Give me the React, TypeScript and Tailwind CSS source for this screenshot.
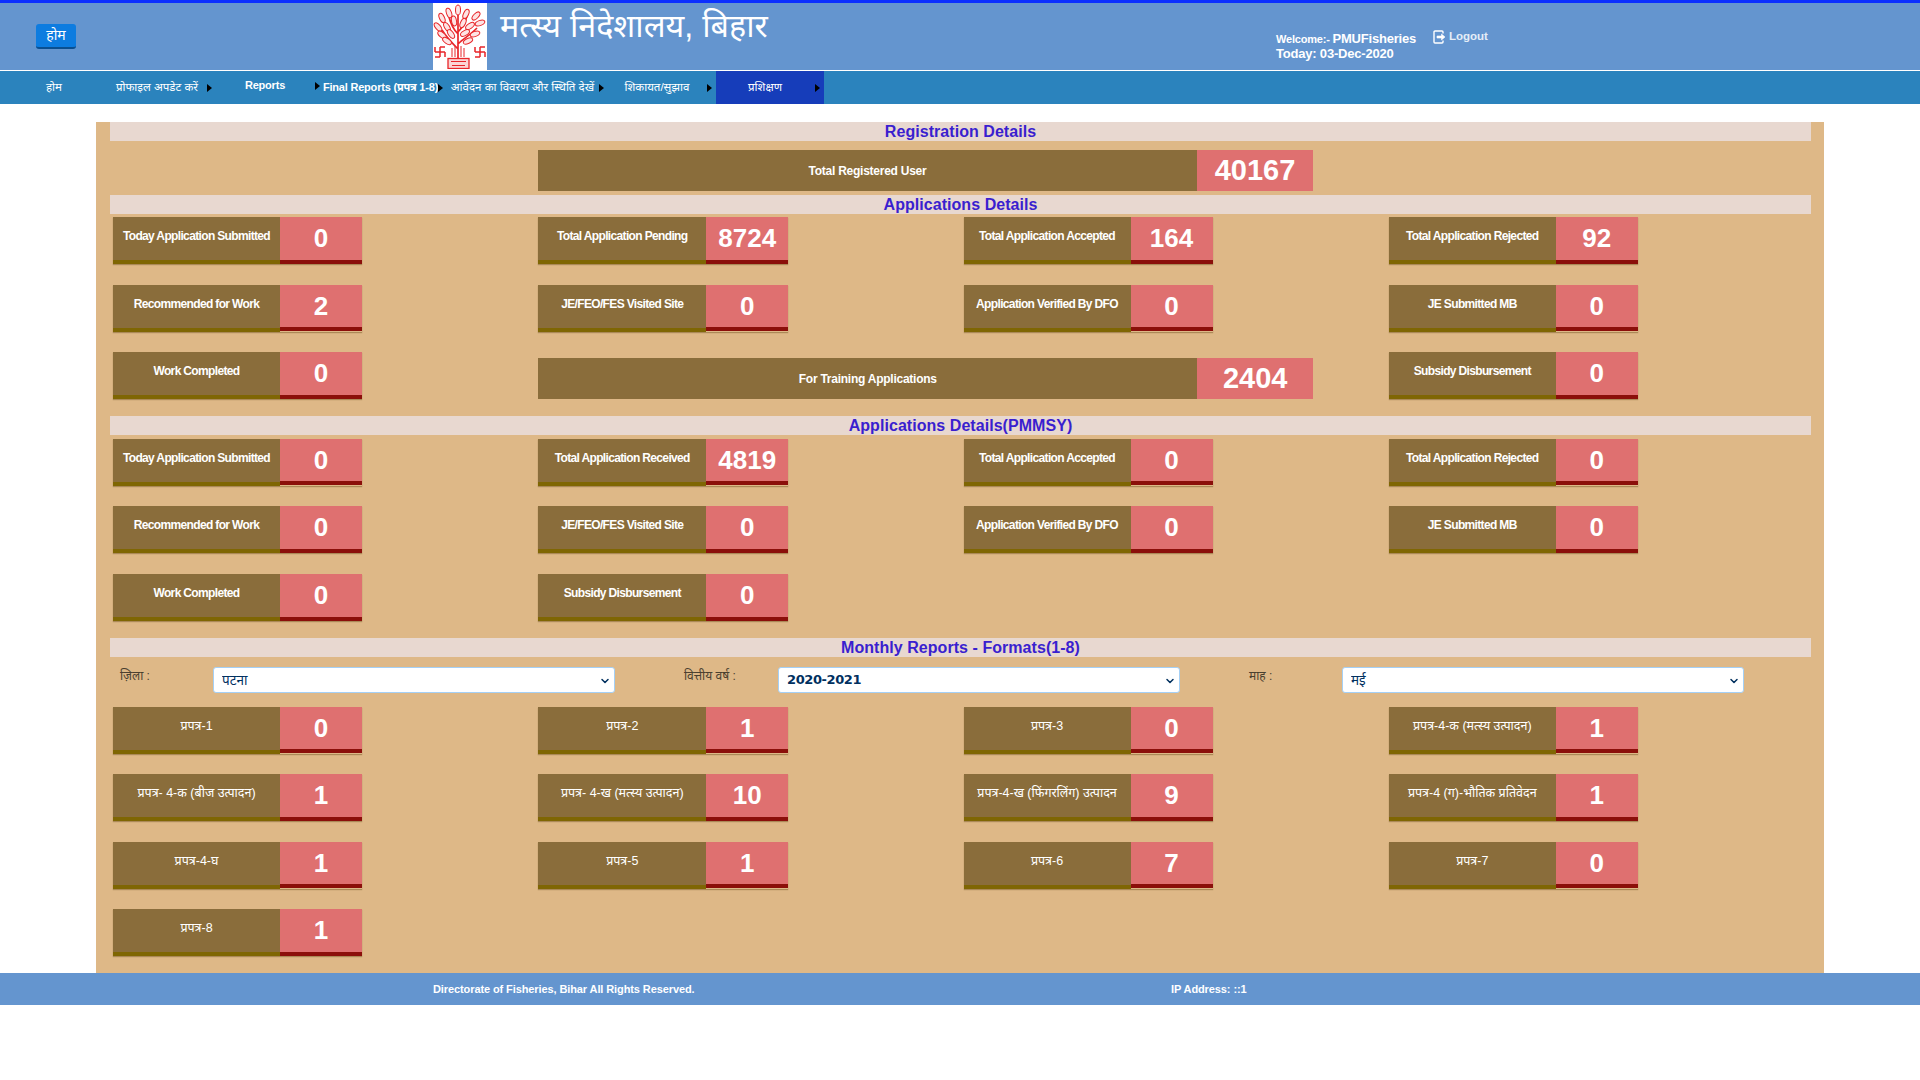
import React from "react";
import { ChevronDown } from "lucide-react";

type CardData = { label: string; value: string; edge?: boolean; hindi?: boolean };

const navItems = [
  { label: "होम", width: "w-[108px]", arrow: false, hindi: true },
  { label: "प्रोफाइल अपडेट करें", width: "w-[108px]", arrow: true, hindi: true },
  { label: "Reports", width: "w-[108px]", arrow: true, raised: true },
  { label: "Final Reports (प्रपत्र 1-8)", width: "w-[123px]", arrow: true },
  { label: "आवेदन का विवरण और स्थिति देखें", width: "w-[161px]", arrow: true, hindi: true },
  { label: "शिकायत/सुझाव", width: "w-[108px]", arrow: true, hindi: true },
  { label: "प्रशिक्षण", width: "w-[108px]", arrow: true, active: true, hindi: true },
];

const appRows: CardData[] = [
  { label: "Today Application Submitted", value: "0" },
  { label: "Total Application Pending", value: "8724" },
  { label: "Total Application Accepted", value: "164" },
  { label: "Total Application Rejected", value: "92" },
  { label: "Recommended for Work", value: "2", edge: true },
  { label: "JE/FEO/FES Visited Site", value: "0", edge: true },
  { label: "Application Verified By DFO", value: "0", edge: true },
  { label: "JE Submitted MB", value: "0", edge: true },
];

const pmmsy: CardData[] = [
  { label: "Today Application Submitted", value: "0", edge: true },
  { label: "Total Application Received", value: "4819", edge: true },
  { label: "Total Application Accepted", value: "0", edge: true },
  { label: "Total Application Rejected", value: "0", edge: true },
  { label: "Recommended for Work", value: "0" },
  { label: "JE/FEO/FES Visited Site", value: "0" },
  { label: "Application Verified By DFO", value: "0" },
  { label: "JE Submitted MB", value: "0" },
  { label: "Work Completed", value: "0" },
  { label: "Subsidy Disbursement", value: "0" },
];

const formats: CardData[] = [
  { label: "प्रपत्र-1", value: "0", edge: true, hindi: true },
  { label: "प्रपत्र-2", value: "1", edge: true, hindi: true },
  { label: "प्रपत्र-3", value: "0", edge: true, hindi: true },
  { label: "प्रपत्र-4-क (मत्स्य उत्पादन)", value: "1", edge: true, hindi: true },
  { label: "प्रपत्र- 4-क (बीज उत्पादन)", value: "1", hindi: true },
  { label: "प्रपत्र- 4-ख (मत्स्य उत्पादन)", value: "10", hindi: true },
  { label: "प्रपत्र-4-ख (फिंगरलिंग) उत्पादन", value: "9", hindi: true },
  { label: "प्रपत्र-4 (ग)-भौतिक प्रतिवेदन", value: "1", hindi: true },
  { label: "प्रपत्र-4-घ", value: "1", edge: true, hindi: true },
  { label: "प्रपत्र-5", value: "1", edge: true, hindi: true },
  { label: "प्रपत्र-6", value: "7", edge: true, hindi: true },
  { label: "प्रपत्र-7", value: "0", edge: true, hindi: true },
  { label: "प्रपत्र-8", value: "1", hindi: true },
];

const leaves = [
  [25, 7, 0], [16, 10, -20], [33, 11, 25], [9, 15, -25], [43, 13, 45],
  [21, 18, -10], [30, 20, 25], [5, 24, -40], [14, 24, -30], [37, 23, 55],
  [47, 20, 70], [9, 32, -50], [18, 31, -35], [42, 31, 70], [32, 30, 60],
  [14, 38, -55], [35, 38, 65],
];

const Emblem = () => (
  <svg viewBox="0 0 54 66" className="h-[66px] w-[54px]" fill="none" stroke="#e8262a">
    <path d="M25 55V12M25 46C19 40 14 35 9 27M25 41C30 36 37 32 44 25M25 31C21 27 18 22 16 14M25 29C29 25 32 20 34 13" strokeWidth="1.7" />
    {leaves.map(([x, y, r], i) => (
      <ellipse key={i} cx={x} cy={y} rx="2.5" ry="5" strokeWidth="1" fill="#fde4e4" transform={`rotate(${r} ${x} ${y})`} />
    ))}
    <path d="M19 45v9M22 43v11M28 43v11M31 45v9" strokeWidth="1" />
    <path d="M7 44v10M2 49h10M7 44h5M12 49v5M7 54H2M2 49v-5" strokeWidth="1.5" />
    <path d="M47 44v10M42 49h10M47 44h5M52 49v5M47 54h-5M42 49v-5" strokeWidth="1.5" />
    <rect x="15" y="55.5" width="21" height="10" strokeWidth="1.3" fill="#fbd5d5" />
    <path d="M18 58.5h15M19 62.5h13" strokeWidth="1.1" />
  </svg>
);

const SectionTitle = ({ title }: { title: string }) => (
  <div className="h-[19px] bg-[#e8d8d0] text-center text-[16px] font-bold leading-[19px] tracking-[0.05px] text-[#3a1fcf]">{title}</div>
);

const Card = ({ label, value, edge, hindi }: CardData) => (
  <div className="ml-[3px] flex h-[47px] w-fit shadow-[0_1px_1px_rgba(120,90,40,0.5)] [&:nth-child(4n+2)>div:first-child]:w-[168px]">
    <div
      className={`h-[47px] w-[167px] border-b-4 border-[#7f6603] bg-[#8a6d3b] pt-[11px] text-center leading-4 text-white ${
        hindi ? "text-[12.5px] font-normal" : "text-[12px] font-bold tracking-[-0.65px]"
      }`}
    >
      {label}
    </div>
    <div className={`w-[82px] border-b-4 border-[#8b0f0a] bg-[#df7070] text-center text-[26px] font-bold leading-[43px] text-white ${edge ? "h-[46px]" : "h-[47px]"}`}>
      {value}
    </div>
  </div>
);

const WideBar = ({ label, value }: { label: string; value: string }) => (
  <div className="flex h-[41px] w-[775px]">
    <div className="flex w-[659px] items-center justify-center bg-[#8a6d3b] text-[12px] font-bold tracking-[-0.25px] text-white">{label}</div>
    <div className="flex w-[116px] items-center justify-center bg-[#df7070] text-[29px] font-bold text-white">{value}</div>
  </div>
);

const CardGrid = ({ items, gap = "gap-y-[20.4px]" }: { items: CardData[]; gap?: string }) => (
  <div className={`grid grid-cols-4 ${gap}`}>
    {items.map((c, i) => (
      <Card key={i} {...c} />
    ))}
  </div>
);

const Filter = ({ label, value, labelWidth, year }: { label: string; value: string; labelWidth: string; year?: boolean }) => (
  <div className="flex">
    <div className={`${labelWidth} pt-[1px] text-[12px] leading-4 text-[#4a4030]`}>{label}</div>
    <div className="relative h-[26px] w-[402px]">
      <select
        defaultValue={value}
        className={`h-[26px] w-full appearance-none rounded-[3px] border border-[#a5d0f5] bg-white pl-[8px] text-[#00305f] [font-family:'DejaVu_Sans','Noto_Sans',sans-serif] ${
          year ? "text-[13px] font-bold tracking-[-0.4px]" : "text-[13.5px] font-normal"
        }`}
      >
        <option>{value}</option>
      </select>
      <ChevronDown size={12} strokeWidth={3} className="pointer-events-none absolute right-[4px] top-[8px] text-[#00305f]" />
    </div>
  </div>
);

export default function App() {
  return (
    <div className="min-h-[1080px] bg-white [font-family:'Liberation_Sans','Noto_Sans',Arial,sans-serif]">
      <header className="flex h-[71px] border-t-[3px] border-b border-t-[#0a2fff] border-b-white bg-[#6495cf]">
        <div className="w-[433px] pl-[36px] pt-[20px]">
          <button className="h-[25px] w-[40px] rounded-[3px] border-b-2 border-[#0a4f90] bg-[#0d7ce0] text-[14px] text-white">होम</button>
        </div>
        <div className="w-[54px] bg-white">
          <Emblem />
        </div>
        <div className="w-[789px] pl-[13px] pt-[1px] text-[32.3px] leading-[44px] text-white">मत्स्य निदेशालय, बिहार</div>
        <div className="w-[157px] pt-[28px] text-white">
          <div className="h-[15px] text-[13px] font-bold leading-[15px] tracking-[-0.2px]">
            <span className="text-[11px]">Welcome:- </span>PMUFisheries
          </div>
          <div className="text-[13px] font-bold leading-[15px] tracking-[-0.2px]">Today: 03-Dec-2020</div>
        </div>
        <div className="mt-[27px] flex h-[14px] items-center gap-[3px] text-[11.5px] font-bold text-[#e4edf7]">
          <svg viewBox="0 0 13 14" className="h-[14px] w-[13px] shrink-0" fill="none" stroke="#fff" strokeWidth="1.4">
            <path d="M10 3.5V2a1 1 0 0 0-1-1H2a1 1 0 0 0-1 1v10a1 1 0 0 0 1 1h7a1 1 0 0 0 1-1v-1.500" />
            <path d="M4 6h4.500V4L12 7 8.500 10V8H4z" fill="#fff" strokeWidth="0.6" />
          </svg>
          Logout
        </div>
      </header>

      <nav className="flex h-[33px] bg-[#2b83bd]">
        {navItems.map((item) => (
          <div
            key={item.label}
            className={`relative flex items-center justify-center whitespace-nowrap text-white ${item.width} ${item.arrow ? "pr-[10px]" : ""} ${item.active ? "bg-[#163dba]" : ""} ${
              item.hindi ? "text-[11.5px] font-normal" : "text-[11px] font-bold tracking-[-0.2px]"
            } ${item.raised ? "pb-[4px]" : ""}`}
          >
            {item.label}
            {item.arrow && (
              <span
                className={`absolute right-[4px] h-0 w-0 border-y-[4.5px] border-l-[5px] border-y-transparent border-l-black ${item.raised ? "top-[11px]" : "top-[13px]"}`}
              />
            )}
          </div>
        ))}
      </nav>

      <main className="mx-[96px] mt-[18px] h-[851px] bg-[#deb887] pl-[14px] pr-[13px]">
        <SectionTitle title="Registration Details" />
        <div className="mt-[9px] pl-[428px]">
          <WideBar label="Total Registered User" value="40167" />
        </div>

        <div className="mt-[4px]">
          <SectionTitle title="Applications Details" />
        </div>
        <div className="mt-[3px]">
          <CardGrid items={appRows} gap="gap-y-[21px]" />
        </div>
        <div className="mt-[20px] grid grid-cols-4 items-end">
          <Card label="Work Completed" value="0" />
          <div className="col-span-2 pl-[3px]">
            <WideBar label="For Training Applications" value="2404" />
          </div>
          <Card label="Subsidy Disbursement" value="0" />
        </div>

        <div className="mt-[17px]">
          <SectionTitle title="Applications Details(PMMSY)" />
        </div>
        <div className="mt-[4px]">
          <CardGrid items={pmmsy} />
        </div>

        <div className="mt-[17px]">
          <SectionTitle title="Monthly Reports - Formats(1-8)" />
        </div>
        <div className="mt-[10px] flex pl-[10px]">
          <Filter label="ज़िला :" value="पटना" labelWidth="w-[93px]" />
          <div className="ml-[69px]">
            <Filter label="वित्तीय वर्ष :" value="2020-2021" labelWidth="w-[94px]" year />
          </div>
          <div className="ml-[69px]">
            <Filter label="माह :" value="मई" labelWidth="w-[93px]" />
          </div>
        </div>
        <div className="mt-[14px]">
          <CardGrid items={formats} />
        </div>
      </main>

      <footer className="flex h-[32px] items-center bg-[#6495cf] text-[11px] font-bold tracking-[-0.1px] text-white">
        <div className="w-[1171px] pl-[433px]">Directorate of Fisheries, Bihar All Rights Reserved.</div>
        <div>IP Address: ::1</div>
      </footer>
    </div>
  );
}
